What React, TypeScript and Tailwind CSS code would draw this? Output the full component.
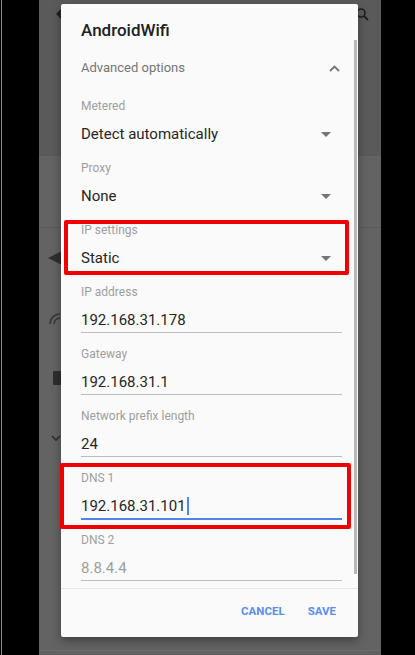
import React from "react";

const Caret = () => (
  <svg width="10" height="5" viewBox="0 0 10 5" className="mr-[11px]">
    <path d="M0 0 L10 0 L5 5 Z" fill="#757575" />
  </svg>
);

function Dropdown({ label, value }: { label: string; value: string }) {
  return (
    <div className="h-[62px] pr-[16px]">
      <div className="h-[14px] text-[12px] leading-[14px] text-[#9e9e9e]">{label}</div>
      <div className="mt-[14px] flex h-[14px] items-center justify-between">
        <span className="text-[15px] leading-[14px] text-[#262626]">{value}</span>
        <Caret />
      </div>
    </div>
  );
}

function Field({
  label,
  value,
  focused,
  hint,
}: {
  label: string;
  value: string;
  focused?: boolean;
  hint?: boolean;
}) {
  return (
    <div className="h-[62px] pr-[16px]">
      <div className="h-[14px] text-[12px] leading-[14px] text-[#9e9e9e]">{label}</div>
      <div className="mt-[14px] flex h-[14px] items-center">
        <span className={`text-[15px] leading-[14px] ${hint ? "text-[#9e9e9e]" : "text-[#262626]"}`}>
          {value}
        </span>
        {focused && <span className="ml-[1px] h-[18px] w-[2px] bg-[#4f86ec]" />}
      </div>
      <div
        className={`mt-[5px] ${focused ? "h-[2px] bg-[#4f86ec]" : "h-[1px] bg-[#bdbdbd]"}`}
      />
    </div>
  );
}

export default function App() {
  return (
    <div
      className="relative flex h-[655px] w-[415px] overflow-hidden bg-black"
      style={{ fontFamily: "Roboto, 'Noto Sans', sans-serif" }}
    >
      {/* left black strip */}
      <div className="h-full w-[39px] shrink-0">
        <div className="ml-[1px] h-full w-[1px] bg-[#8a8a8a]" />
      </div>

      {/* phone screen */}
      <div className="relative flex h-full w-[342px] shrink-0 flex-col bg-[#636363]">
        <div className="h-[156px] bg-[#5a5a5a]">
          <div className="flex h-[28px] items-center justify-between pl-[17px] pr-[12px]">
            <svg width="12" height="12" viewBox="0 0 12 12">
              <path d="M11 6 H2 M6 1.5 L1.5 6 L6 10.5" stroke="#1f1f1f" strokeWidth="2" fill="none" />
            </svg>
            <svg width="13" height="13" viewBox="0 0 13 13">
              <circle cx="5" cy="5" r="4" stroke="#1f1f1f" strokeWidth="1.6" fill="none" />
              <path d="M8 8 L12 12" stroke="#1f1f1f" strokeWidth="1.8" />
            </svg>
          </div>
        </div>
        <div className="h-[72px] border-b border-[#5a5a5a] bg-[#636363]" />
        <div className="flex flex-col pl-[9px]">
          <div className="flex h-[60px] items-center">
            <svg width="14" height="14" viewBox="0 0 14 14">
              <path d="M0 7 L14 0 L14 14 Z" fill="#2e2e2e" />
            </svg>
          </div>
          <div className="flex h-[60px] items-center">
            <svg width="14" height="14" viewBox="0 0 14 14">
              <path d="M2 13 A10 10 0 0 1 12 3" stroke="#383838" strokeWidth="1.6" fill="none" />
              <path d="M6 13 A6 6 0 0 1 12 7" stroke="#383838" strokeWidth="1.6" fill="none" />
            </svg>
          </div>
          <div className="flex h-[60px] items-center pl-[5px]">
            <div className="h-[14px] w-[8px] rounded-[1px] bg-[#2e2e2e]" />
          </div>
          <div className="flex h-[60px] items-center pl-[3px]">
            <svg width="10" height="7" viewBox="0 0 10 7">
              <path d="M1 1 L5 5 L9 1" stroke="#2e2e2e" strokeWidth="1.6" fill="none" />
            </svg>
          </div>
        </div>
        <div className="mt-auto h-[5px] border-t border-[#6e6e6e] bg-[#616161]" />

        {/* dialog */}
        <div className="absolute left-[22px] top-[4px] flex h-[633px] w-[297px] flex-col rounded-[2px] bg-[#fafafa] shadow-[0_4px_10px_rgba(0,0,0,0.35)]">
          <div className="h-[44px] pl-[20px] pt-[17px] text-[17px] font-medium leading-[18px] text-[#212121]">
            AndroidWifi
          </div>
          <div className="flex h-[40px] items-center justify-between pl-[20px] pr-[18px]">
            <span className="text-[13px] text-[#757575]">Advanced options</span>
            <svg width="11" height="7" viewBox="0 0 11 7">
              <path d="M1 6 L5.5 1.5 L10 6" stroke="#757575" strokeWidth="1.8" fill="none" />
            </svg>
          </div>
          <div className="flex flex-col pl-[20px] pt-[11px]">
            <Dropdown label="Metered" value="Detect automatically" />
            <Dropdown label="Proxy" value="None" />
            <Dropdown label="IP settings" value="Static" />
            <Field label="IP address" value="192.168.31.178" />
            <Field label="Gateway" value="192.168.31.1" />
            <Field label="Network prefix length" value="24" />
            <Field label="DNS 1" value="192.168.31.101" focused />
            <Field label="DNS 2" value="8.8.4.4" hint />
          </div>
          <div className="mt-[-7px] h-[1px] bg-[#e6e6e6]" />
          <div className="flex flex-1 items-center justify-end gap-[23px] pb-[2px] pr-[22px]">
            <span className="text-[11.5px] font-bold text-[#5b8def]">CANCEL</span>
            <span className="text-[11.5px] font-bold text-[#5b8def]">SAVE</span>
          </div>
          <div className="absolute right-[1px] top-[36px] h-[534px] w-[3px] bg-[#b8b8b8]" />
        </div>
      </div>

      {/* right black */}
      <div className="h-full flex-1" />

      {/* red annotation boxes */}
      <div className="absolute left-[64px] top-[220px] h-[55px] w-[285px] rounded-[2px] border-[4px] border-[#f00000]" />
      <div className="absolute left-[60px] top-[463px] h-[66px] w-[291px] rounded-[2px] border-[4px] border-[#f00000]" />
    </div>
  );
}
